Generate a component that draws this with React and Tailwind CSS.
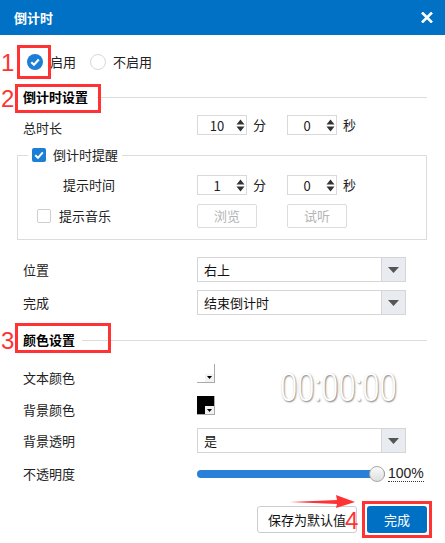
import React from "react";

function Spinner({ value }) {
  return (
    <div className="flex h-[20px] w-[50px] items-center border border-[#d9d9d9] bg-white">
      <span className="w-[38px] text-center text-[13px] leading-none text-[#222]">{value}</span>
      <svg width="9" height="13" viewBox="0 0 9 13">
        <path d="M4.5 0.5 L8.5 5.5 H0.5Z M0.5 7.5 H8.5 L4.5 12.5Z" fill="#333" />
      </svg>
    </div>
  );
}

function Select({ value }) {
  return (
    <div className="flex h-[25px] w-[209px] border border-[#d5d5d5] bg-white">
      <span className="flex-1 pl-[6px] text-[13px] leading-[23px] text-[#111]">{value}</span>
      <div className="flex w-[24px] items-center justify-center border-l border-[#d5d5d5] bg-[#e8ebef]">
        <svg width="11" height="6" viewBox="0 0 11 6">
          <path d="M0 0H11L5.5 6Z" fill="#555" />
        </svg>
      </div>
    </div>
  );
}

function Swatch({ color }) {
  return (
    <div className={`relative h-[19px] w-[18px] border-r border-b border-[#aaa] ${color}`}>
      <div className="absolute bottom-0 right-0 flex h-[8px] w-[9px] items-center justify-center bg-[#f2f2f2]">
        <svg width="5" height="3" viewBox="0 0 5 3">
          <path d="M0 0H5L2.5 3Z" fill="#000" />
        </svg>
      </div>
    </div>
  );
}

function Heading({ text, gap }) {
  return (
    <div className="flex h-[22px] items-center pl-[6px]">
      <span className="text-[13px] font-bold text-black">{text}</span>
      <div className={`h-px flex-1 bg-[#dcdcdc] ${gap}`} />
    </div>
  );
}

export default function App() {
  return (
    <div className="relative h-[543px] w-[445px] overflow-hidden bg-white font-['Noto_Sans_CJK_SC','Microsoft_YaHei',sans-serif] text-[13px] text-[#222]">
      {/* Title bar */}
      <div className="flex h-[35px] items-center justify-between bg-[#0071c5] pl-[14px] pr-[12px]">
        <span className="text-[13px] font-bold text-white">倒计时</span>
        <svg width="12" height="11" viewBox="0 0 12 11">
          <path d="M1 0.5 L11 10.5 M11 0.5 L1 10.5" stroke="#fff" strokeWidth="2.6" />
        </svg>
      </div>

      <div className="pl-[17px] pr-[18px]">
        {/* Radio row */}
        <div className="mt-[16px] flex h-[22px] items-center pl-[10px]">
          <svg width="16" height="16" viewBox="0 0 16 16">
            <circle cx="8" cy="8" r="8" fill="#1d7ed6" />
            <path d="M4.3 8.2 L7 10.8 L11.8 5.6" stroke="#fff" strokeWidth="2.2" fill="none" />
          </svg>
          <span className="ml-[7px]">启用</span>
          <div className="ml-[14px] h-[16px] w-[16px] rounded-full border border-[#d8d8d8]" />
          <span className="ml-[7px]">不启用</span>
        </div>

        {/* Heading 1 */}
        <div className="mt-[13px]">
          <Heading text="倒计时设置" gap="ml-[9px]" />
        </div>

        {/* Total duration */}
        <div className="mt-[7px] flex h-[20px] items-center">
          <span className="w-[180px] pl-[6px] pt-[6px]">总时长</span>
          <Spinner value="10" />
          <span className="w-[40px] pl-[6px]">分</span>
          <Spinner value="0" />
          <span className="pl-[6px]">秒</span>
        </div>

        {/* Reminder fieldset */}
        <fieldset className="mt-[13px] border border-[#dcdcdc] pb-[11px]">
          <legend className="ml-[10px] flex h-[14px] items-center px-[4px]">
            <svg width="14" height="14" viewBox="0 0 14 14">
              <rect width="14" height="14" rx="2" fill="#1d7ed6" />
              <path d="M3.2 7.2 L6 9.8 L10.8 4.4" stroke="#fff" strokeWidth="2" fill="none" />
            </svg>
            <span className="ml-[7px]">倒计时提醒</span>
          </legend>
          <div className="mt-[13px] flex h-[20px] items-center">
            <span className="w-[179px] pl-[45px]">提示时间</span>
            <Spinner value="1" />
            <span className="w-[40px] pl-[6px]">分</span>
            <Spinner value="0" />
            <span className="pl-[6px]">秒</span>
          </div>
          <div className="mt-[9px] flex h-[24px] items-center">
            <div className="flex w-[179px] items-center pl-[19px]">
              <div className="h-[14px] w-[14px] rounded-[2px] border border-[#cfcfcf]" />
              <span className="ml-[8px]">提示音乐</span>
            </div>
            <div className="flex h-[24px] w-[60px] items-center justify-center rounded-[2px] border border-[#dcdcdc] text-[#b5b5b5]">浏览</div>
            <div className="ml-[30px] flex h-[24px] w-[60px] items-center justify-center rounded-[2px] border border-[#dcdcdc] text-[#b5b5b5]">试听</div>
          </div>
        </fieldset>

        {/* Position */}
        <div className="mt-[17px] flex h-[25px] items-center">
          <span className="w-[180px] pl-[6px]">位置</span>
          <Select value="右上" />
        </div>
        <div className="mt-[8px] flex h-[25px] items-center">
          <span className="w-[180px] pl-[6px]">完成</span>
          <Select value="结束倒计时" />
        </div>

        {/* Heading 2 */}
        <div className="mt-[14px]">
          <Heading text="颜色设置" gap="ml-[7px]" />
        </div>

        {/* Colors */}
        <div className="mt-[13px] flex">
          <div className="flex flex-col">
            <div className="flex h-[18px] items-center">
              <span className="w-[180px] pl-[6px] pt-[9px]">文本颜色</span>
              <Swatch color="bg-white" />
            </div>
            <div className="mt-[14px] flex h-[19px] items-center">
              <span className="w-[180px] pl-[6px] pt-[9px]">背景颜色</span>
              <Swatch color="bg-black" />
            </div>
          </div>
          <div className="ml-[65px] mt-[4px] origin-left scale-x-[0.82] font-['Roboto','Liberation_Sans',sans-serif] text-[38px] font-light leading-[40px] text-white [text-shadow:1px_1px_2px_rgba(0,0,0,0.55)]">
            00:00:00
          </div>
        </div>

        <div className="mt-[13px] flex h-[25px] items-center">
          <span className="w-[180px] pl-[6px]">背景透明</span>
          <Select value="是" />
        </div>

        {/* Opacity */}
        <div className="mt-[13px] flex h-[16px] items-center">
          <span className="w-[180px] pl-[6px]">不透明度</span>
          <div className="relative h-[8px] w-[188px] rounded-full bg-[#2a7fd8]">
            <div className="absolute right-0 top-[-4px] h-[16px] w-[16px] rounded-full border border-[#a8a8a8] bg-gradient-to-b from-[#fafafa] to-[#dedede]" />
          </div>
          <span className="ml-[3px] border-b border-dotted border-[#333] font-['Liberation_Sans',sans-serif] text-[14px] leading-[15px]">100%</span>
        </div>

        {/* Buttons */}
        <div className="mt-[24px] flex h-[27px] justify-end">
          <div className="flex w-[100px] items-center justify-center rounded-[3px] border border-[#cccccc] bg-white text-[#111]">保存为默认值</div>
          <div className="ml-[10px] flex w-[60px] items-center justify-center rounded-[3px] bg-[#0070c4] text-white">完成</div>
        </div>
      </div>

      {/* Annotations */}
      <div className="absolute left-[17px] top-[45px] h-[34px] w-[34px] border-[3px] border-[#f33]" />
      <div className="absolute left-[15px] top-[84px] h-[29px] w-[86px] border-[3px] border-[#f33]" />
      <div className="absolute left-[15px] top-[323px] h-[30px] w-[96px] border-[3px] border-[#f33]" />
      <div className="absolute left-[362px] top-[501px] h-[37px] w-[70px] border-[3px] border-[#f33]" />
      <span className="absolute left-[1px] top-[51px] font-['Liberation_Sans',sans-serif] text-[24px] leading-none text-[#f33]">1</span>
      <span className="absolute left-[1px] top-[87px] font-['Liberation_Sans',sans-serif] text-[24px] leading-none text-[#f33]">2</span>
      <span className="absolute left-[1px] top-[329px] font-['Liberation_Sans',sans-serif] text-[24px] leading-none text-[#f33]">3</span>
      <span className="absolute left-[345px] top-[509px] font-['Liberation_Sans',sans-serif] text-[24px] leading-none text-[#f33]">4</span>
      <svg className="absolute left-[288px] top-[494px]" width="70" height="15" viewBox="0 0 70 15">
        <path d="M2 8 L49 6 L48 1 L67 8 L48 14 L49 10 Z" fill="#f33" />
      </svg>
    </div>
  );
}
